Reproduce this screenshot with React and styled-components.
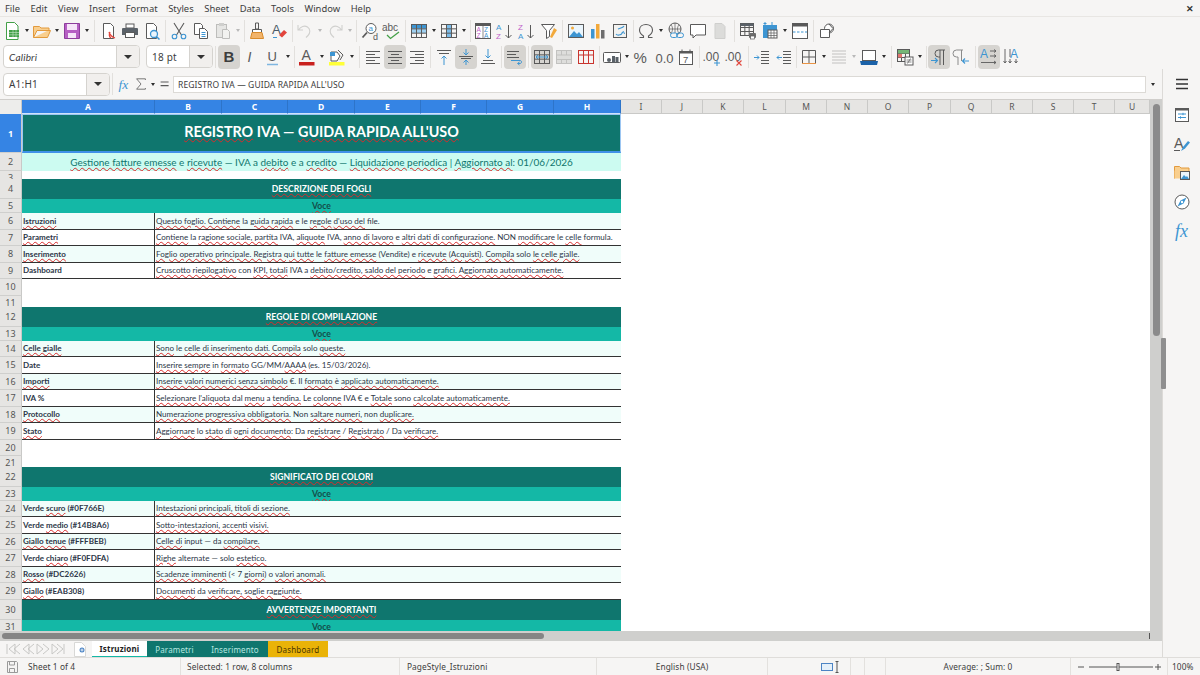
import React from "react";
import styled, { createGlobalStyle } from "styled-components";

const UI = `"Noto Sans", "Open Sans", sans-serif`;
const CELL = `Lato, "Open Sans", sans-serif`;
const DARK = "#0f766e";
const MID = "#14b8a6";
const LIGHT = "#f0fdfa";
const GREY = "#5a5a5a";
const BLUE = "#3d95d2";

const GlobalStyle = createGlobalStyle`
  html, body { margin: 0; padding: 0; background: #f6f5f4; }
  * { box-sizing: border-box; }
`;

const Window = styled.div`
  width: 1200px;
  height: 675px;
  display: flex;
  flex-direction: column;
  overflow: hidden;
  background: #f6f5f4;
  font-family: ${UI};
  color: #3d3d3d;
`;

const MenuBar = styled.div`
  height: 17px;
  flex: none;
  display: flex;
  align-items: center;
  padding: 0 5px;
  gap: 10.6px;
  font-size: 9.4px;
  border-bottom: 1px solid #e8e6e3;
  position: relative;
`;

const CloseMark = styled.span`
  position: absolute;
  right: 6px;
  top: 2px;
  font-size: 9px;
  font-weight: 700;
  color: #333;
`;

const Bar = styled.div`
  height: ${(p) => p.$h}px;
  flex: none;
  display: flex;
  align-items: center;
  padding-left: 1px;
`;

const ToolButton = styled.div`
  width: 22px;
  height: 24px;
  flex: none;
  display: flex;
  align-items: center;
  justify-content: center;
  border-radius: 4px;
  background: ${(p) => (p.$on ? "#d6d4d0" : "transparent")};
`;

const Caret = styled.div`
  width: 8px;
  flex: none;
  display: flex;
  justify-content: center;
  &::after {
    content: "";
    border-top: 3px solid ${(p) => (p.$off ? "#b9b9b9" : "#2e2e2e")};
    border-left: 2.5px solid transparent;
    border-right: 2.5px solid transparent;
  }
`;

const Sep = styled.div`
  width: ${(p) => p.$w}px;
  flex: none;
  height: 22px;
  display: flex;
  justify-content: center;
  &::after {
    content: "";
    width: 1px;
    background: #e2e0dd;
  }
`;

const Combo = styled.div`
  width: ${(p) => p.$w}px;
  height: 23px;
  flex: none;
  margin-left: ${(p) => p.$ml || 0}px;
  display: flex;
  background: #fff;
  border: 1px solid #d5d3cf;
  border-radius: 4px;
  overflow: hidden;
`;

const ComboText = styled.div`
  flex: 1;
  display: flex;
  align-items: center;
  padding-left: 5px;
  font-size: 10px;
  font-family: ${(p) => (p.$italic ? CELL : UI)};
  font-style: ${(p) => (p.$italic ? "italic" : "normal")};
  letter-spacing: 0.2px;
`;

const ComboArrow = styled.div`
  width: 23px;
  flex: none;
  display: flex;
  align-items: center;
  justify-content: center;
  background: #f1efed;
  border-left: 1px solid #d5d3cf;
  &::after {
    content: "";
    border-top: 4px solid #333;
    border-left: 4px solid transparent;
    border-right: 4px solid transparent;
  }
`;

const Body = styled.div`
  flex: 1;
  min-height: 0;
  display: flex;
`;

const MainColumn = styled.div`
  width: 1162px;
  flex: none;
  display: flex;
  flex-direction: column;
`;

const FormulaBar = styled.div`
  height: 30px;
  flex: none;
  display: flex;
  align-items: center;
  padding-left: 3px;
`;

const FormulaIcon = styled.div`
  width: ${(p) => p.$w}px;
  flex: none;
  display: flex;
  justify-content: center;
  align-items: center;
`;

const FormulaInput = styled.div`
  width: 973px;
  height: 17px;
  flex: none;
  display: flex;
  align-items: center;
  padding-left: 4px;
  background: #fff;
  border: 1px solid #dcdad6;
  font-size: 8.5px;
  letter-spacing: 0.1px;
`;

const Sheet = styled.div`
  flex: 1;
  min-height: 0;
  display: flex;
  background: #fff;
  border-top: 1px solid #d0cecb;
`;

const GridArea = styled.div`
  width: 1150px;
  flex: none;
  overflow: hidden;
`;

const HeaderRow = styled.div`
  display: flex;
  height: 14px;
`;

const Corner = styled.div`
  width: 22px;
  flex: none;
  background: #ededeb;
  border-right: 1px solid #c9c9c7;
`;

const ColHead = styled.div`
  width: ${(p) => p.$w}px;
  flex: none;
  display: flex;
  align-items: center;
  justify-content: center;
  font-size: 8.5px;
  font-weight: ${(p) => (p.$on ? 700 : 400)};
  color: ${(p) => (p.$on ? "#fff" : "#555")};
  background: ${(p) => (p.$on ? "#3584e4" : "#e6e5e3")};
  border-right: 1px solid ${(p) => (p.$on ? "#2d74c9" : "#c9c9c7")};
  border-bottom: 1px solid ${(p) => (p.$on ? "#cfe3fa" : "#c9c9c7")};
`;

const Row = styled.div`
  display: grid;
  grid-template-columns: 22px 133px 466px;
  height: ${(p) => p.$h}px;
`;

const RowHead = styled.div`
  display: flex;
  align-items: center;
  justify-content: center;
  font-size: 9px;
  font-weight: ${(p) => (p.$on ? 700 : 400)};
  color: ${(p) => (p.$on ? "#fff" : "#555")};
  background: ${(p) => (p.$on ? "#3584e4" : "#e6e5e3")};
  border-right: 1px solid #c9c9c7;
  border-bottom: 1px solid #cfcfcd;
`;

const Merged = styled.div`
  grid-column: span 2;
  display: flex;
  align-items: center;
  justify-content: center;
  position: relative;
  font-family: ${CELL};
  overflow: hidden;
  white-space: nowrap;
`;

const TitleCell = styled(Merged)`
  background: ${DARK};
  color: #fff;
  font-size: 14.35px;
  font-weight: 700;
  padding-bottom: 3px;
  border: 1px solid #9cc6f2;
  border-bottom: 2px solid #3f90e8;
`;

const SubtitleCell = styled(Merged)`
  background: #ccfbf1;
  color: ${DARK};
  font-size: 9.95px;
  padding-bottom: 1px;
`;

const SectionCell = styled(Merged)`
  background: ${DARK};
  color: #fff;
  font-size: 8.6px;
  font-weight: 700;
`;

const VoceCell = styled(Merged)`
  background: ${MID};
  color: #134e4a;
  font-size: 8.6px;
  font-weight: 700;
`;

const Cell = styled.div`
  display: flex;
  align-items: center;
  padding-left: 1px;
  font-family: ${CELL};
  font-size: 8.05px;
  font-weight: ${(p) => (p.$bold ? 700 : 400)};
  color: #2d3748;
  background: ${(p) => (p.$alt ? LIGHT : "#fff")};
  border-bottom: 1px solid #333;
  border-right: ${(p) => (p.$bold ? "1px solid #333" : "none")};
  white-space: nowrap;
  overflow: hidden;
`;

const Wavy = styled.span`
  text-decoration: underline wavy #d92b2b 1px;
  text-underline-offset: 1px;
`;

const VScroll = styled.div`
  width: 12px;
  flex: none;
  background: #cfcfcd;
  padding: 4px 2.5px 0;
`;

const VThumb = styled.div`
  height: 232px;
  border-radius: 4px;
  background: #8b8b8b;
`;

const HScroll = styled.div`
  height: 10px;
  flex: none;
  background: #cfcfcd;
  padding: 2px 12px 2px 2px;
  position: relative;
`;

const HThumb = styled.div`
  width: 542px;
  height: 6px;
  border-radius: 3px;
  background: #858585;
`;

const HMark = styled.div`
  position: absolute;
  left: 1149px;
  top: 2px;
  width: 1px;
  height: 6px;
  background: #555;
`;

const TabBar = styled.div`
  height: 16px;
  flex: none;
  display: flex;
  align-items: stretch;
  padding-left: 5px;
`;

const TabNav = styled.div`
  width: 62px;
  flex: none;
  display: flex;
  align-items: center;
  justify-content: center;
`;

const AddTab = styled.div`
  width: 25px;
  flex: none;
  display: flex;
  align-items: center;
  justify-content: center;
`;

const tabBg = { on: "#fff", teal: DARK, gold: "#eab308" };
const tabFg = { on: "#222", teal: "#b8e8e0", gold: "#4a3500" };

const Tab = styled.div`
  width: ${(p) => p.$w}px;
  flex: none;
  display: flex;
  align-items: center;
  justify-content: center;
  font-size: 8px;
  letter-spacing: 0.15px;
  font-weight: ${(p) => (p.$kind === "on" ? 700 : 400)};
  color: ${(p) => tabFg[p.$kind]};
  background: ${(p) => tabBg[p.$kind]};
  border-bottom: ${(p) => (p.$kind === "on" ? `1px solid ${MID}` : "none")};
`;

const Sidebar = styled.div`
  flex: 1;
  position: relative;
  display: flex;
  flex-direction: column;
  align-items: center;
  gap: 9px;
  padding-top: 5px;
  border-left: 1px solid #dcdad7;
`;

const SideIcon = styled.div`
  height: 20px;
  display: flex;
  align-items: center;
  justify-content: center;
  margin-bottom: ${(p) => p.$mb || 0}px;
`;

const SideHandle = styled.div`
  position: absolute;
  left: -2px;
  top: 269px;
  width: 5px;
  height: 51px;
  background: #8f8f8f;
  border-radius: 1px;
`;

const StatusBar = styled.div`
  height: 18px;
  flex: none;
  display: flex;
  align-items: center;
  font-size: 8.3px;
  letter-spacing: 0.1px;
  border-top: 1px solid #dfddda;
`;

const StatusPart = styled.div`
  width: ${(p) => p.$w}px;
  height: 100%;
  flex: none;
  display: flex;
  align-items: center;
  gap: 9px;
  padding-left: ${(p) => p.$pl || 0}px;
  justify-content: ${(p) => (p.$center ? "center" : "flex-start")};
  border-right: ${(p) => (p.$last ? "none" : "1px solid #e3e1de")};
`;

const Svg = ({ children, s = 20, w }) => (
  <svg width={w || s} height={s} viewBox={`0 0 ${w || s} ${s}`} fill="none" strokeWidth="1">
    {children}
  </svg>
);

const Table = ({ c = GREY, x = 2.5, y = 3.5, w = 15, h = 13 }) => (
  <g stroke={c}>
    <rect x={x} y={y} width={w} height={h} />
    <path d={`M${x} ${y + h / 3}H${x + w}M${x} ${y + (2 * h) / 3}H${x + w}M${x + w / 3} ${y}V${y + h}M${x + (2 * w) / 3} ${y}V${y + h}`} />
  </g>
);

const Letter = ({ x, y, c = GREY, size = 9, weight = 400, style, serif, children }) => (
  <text
    x={x}
    y={y}
    fill={c}
    fontSize={size}
    fontWeight={weight}
    fontFamily={serif ? "Liberation Serif, serif" : "Liberation Sans, sans-serif"}
    fontStyle={style}
  >
    {children}
  </text>
);

const icons = {
  new: (
    <>
      <path d="M4.5 1.5h8l3.5 3.5v13.500H4.500z" fill="#fff" stroke="#43a047" />
      <rect x="7" y="9" width="10" height="7" fill="#43a047" />
      <path d="M7 11.500h10M7 13.800h10M11 9v7M14 9v7" stroke="#c8e6c9" strokeWidth=".6" />
    </>
  ),
  open: <path d="M1.500 16.500V5.500h6l1.500 1.500h8v2.500H5l-3.500 7h14l3-7H16" fill="#f9cf8e" stroke="#e29a3d" />,
  save: (
    <>
      <path d="M2.500 2.500h15v15h-15z" fill="#b65fc4" stroke="#8d3d9c" />
      <rect x="5" y="3" width="10" height="6" fill="#f6e5f9" />
      <rect x="6" y="12" width="8" height="5" fill="#f6e5f9" />
    </>
  ),
  pdf: (
    <>
      <path d="M5.500 2.500h7l3 3v12h-10z" fill="#fff" stroke={GREY} />
      <path d="M11 11c1 3 3 5 6 6M13 17c-2-1-2-4-1-6" stroke="#e2453c" strokeWidth="1.300" />
    </>
  ),
  print: (
    <>
      <rect x="6" y="3" width="8" height="4" fill="#fff" stroke={GREY} />
      <path d="M3 7h14a1 1 0 0 1 1 1v6h-3v-2H5v2H2V8a1 1 0 0 1 1-1z" fill="#5b6269" />
      <rect x="5.500" y="11.500" width="9" height="5" fill="#fff" stroke={GREY} />
    </>
  ),
  preview: (
    <>
      <path d="M4.500 2.500h7l3 3v12h-10z" fill="#fff" stroke={GREY} />
      <circle cx="12" cy="13" r="3.500" fill="#eaf5fc" stroke={BLUE} strokeWidth="1.300" />
      <path d="M14.500 15.500l3 3" stroke={BLUE} strokeWidth="1.500" />
    </>
  ),
  cut: (
    <>
      <path d="M5 2l7.500 12M15 2L7.500 14" stroke={GREY} strokeWidth="1.100" />
      <circle cx="5.500" cy="15.500" r="2.300" stroke={BLUE} strokeWidth="1.100" />
      <circle cx="14.500" cy="15.500" r="2.300" stroke={BLUE} strokeWidth="1.100" />
    </>
  ),
  copy: (
    <>
      <path d="M3.500 2.500h6l2 2v9h-8z" fill="#fff" stroke={GREY} />
      <path d="M8.500 7.500h5l3 3v7h-8z" fill="#fff" stroke={GREY} />
      <path d="M10.500 11.500h4M10.500 13.500h4M10.500 15.500h4" stroke={BLUE} />
    </>
  ),
  paste: (
    <>
      <rect x="3.500" y="3.500" width="10" height="13" fill="#e6e6e4" stroke="#bdbdbb" />
      <rect x="6" y="2" width="5" height="3" fill="#cfcfcd" />
      <path d="M9.500 8.500h5l2 2v7h-7z" fill="#f2f2f0" stroke="#bdbdbb" />
    </>
  ),
  clone: (
    <>
      <path d="M8.500 2h3v6h-3z" stroke={GREY} />
      <path d="M5.500 8.500h9v3h-9z" fill="#fff" stroke={GREY} />
      <path d="M5 11.500h10l1.500 6h-13z" fill="#f2b46a" stroke="#d98b2b" />
    </>
  ),
  clear: (
    <>
      <Letter x="3" y="13" size={13} c="#4b5a68">A</Letter>
      <path d="M4 16.500h4" stroke={BLUE} />
      <path d="M10 14l5-5 3 2.500-5 5z" fill="#e2453c" />
    </>
  ),
  undo: <path d="M3 4v5h5M3.500 9c2-3.500 6-5 9-3 3 2 3 6 .5 8.500L11 16.500" stroke="#d0d0ce" strokeWidth="1.100" />,
  redo: <path d="M17 4v5h-5M16.500 9c-2-3.500-6-5-9-3-3 2-3 6-.5 8.500L9 16.500" stroke="#d0d0ce" strokeWidth="1.100" />,
  find: (
    <>
      <circle cx="11" cy="7.500" r="5" fill="#fff" stroke={GREY} />
      <path d="M7 11.500L2.500 16.500" stroke={GREY} strokeWidth="1.800" />
      <Letter x="8.500" y="10" size={8} c={BLUE}>a</Letter>
      <Letter x="13" y="19" size={9}>d</Letter>
    </>
  ),
  spell: (
    <>
      <Letter x="0" y="10" size={10}>abc</Letter>
      <path d="M5 14l3.500 3.500L17 11" stroke="#43a047" strokeWidth="1.300" />
    </>
  ),
  rows: (
    <>
      <rect x="3" y="7.500" width="14" height="4.500" fill="#9fd0f0" />
      <rect x="3" y="3.500" width="14" height="4" fill={BLUE} />
      <Table />
    </>
  ),
  cols: (
    <>
      <rect x="7.500" y="4" width="5" height="12" fill="#7cbce8" />
      <Table />
    </>
  ),
  sort: (
    <>
      <rect x="2.500" y="2.500" width="15" height="15" fill="#fff" stroke={GREY} />
      <rect x="2.500" y="2.500" width="15" height="2.500" fill={GREY} />
      <path d="M10 3v14" stroke={GREY} strokeWidth=".7" />
      <Letter x="3.500" y="11" size={6.500} c="#c05fc9">A</Letter>
      <Letter x="3.500" y="17" size={6.500} c="#c05fc9">Z</Letter>
      <Letter x="11" y="11" size={6.500} c={BLUE}>Z</Letter>
      <Letter x="11" y="17" size={6.500} c={BLUE}>A</Letter>
    </>
  ),
  sortAsc: (
    <>
      <Letter x="1" y="9" size={8} c={BLUE}>A</Letter>
      <Letter x="1" y="18" size={8} c="#c05fc9">Z</Letter>
      <path d="M13.500 4v13M10.500 14l3 3 3-3" stroke={GREY} />
    </>
  ),
  sortDesc: (
    <>
      <Letter x="1" y="9" size={8} c="#c05fc9">Z</Letter>
      <Letter x="1" y="18" size={8} c={BLUE}>A</Letter>
      <path d="M13.500 4v13M10.500 14l3 3 3-3" stroke={GREY} />
    </>
  ),
  filter: (
    <>
      <path d="M2.500 3.500h13l-5 6v6l-3 2v-8z" fill="#fff" stroke={GREY} />
      <path d="M15 7l3 2-5 8-2-1z" fill="#f2a93b" />
    </>
  ),
  image: (
    <>
      <rect x="2.500" y="3.500" width="15" height="13" fill="#eaf5fc" stroke={GREY} />
      <circle cx="6.500" cy="7" r="1.500" fill="#f2a93b" />
      <path d="M3 16l5-6 3 3 2-2 4 5z" fill={BLUE} />
    </>
  ),
  chart: (
    <>
      <rect x="3" y="8" width="3.500" height="9.500" fill={BLUE} />
      <rect x="8" y="3" width="3.500" height="14.500" fill="#f2a93b" />
      <rect x="13" y="9" width="3.500" height="8.500" fill="#6d6d6d" />
    </>
  ),
  pivot: (
    <>
      <rect x="3.500" y="3.500" width="13" height="13" fill="#f2f2f0" stroke={GREY} />
      <path d="M6 13c1 1.500 5 2 7-2M14 5c-1 2-4 2-6 3" stroke={BLUE} strokeWidth="1.100" />
      <path d="M11.500 12l2-1.500 1 2.500" stroke={BLUE} />
    </>
  ),
  omega: <path d="M3.500 16.500h4v-1.500C5 13.500 3.500 11.500 3.500 9c0-3.500 3-5.500 6.500-5.500s6.500 2 6.500 5.500c0 2.500-1.500 4.500-4 6v1.500h4" stroke={GREY} strokeWidth="1.100" />,
  link: (
    <>
      <circle cx="9" cy="8" r="6" stroke={GREY} />
      <path d="M3 8h12M9 2v12M5 3.500c2 3 2 6 0 9M13 3.500c-2 3-2 6 0 9" stroke={GREY} strokeWidth=".7" />
      <rect x="4.500" y="12" width="7" height="4.500" rx="2.200" fill="#f6f5f4" stroke={BLUE} />
      <rect x="10.500" y="12" width="7" height="4.500" rx="2.200" stroke={BLUE} />
    </>
  ),
  comment: <path d="M2.500 3.500h15v10.500H8L5 17v-3H2.500z" fill="#fff" stroke={GREY} />,
  headers: <path d="M5 2.500h7l3 3v12H5z" fill="#dcdcda" stroke="#cfcfcd" />,
  printArea: (
    <>
      <Table x={2.500} y={2.500} w={13} h={12} />
      <rect x="2.500" y="2.500" width="13" height="2.500" fill="#5b6269" />
      <rect x="11" y="12" width="7" height="5" rx="1" fill="#6d6d6d" />
      <rect x="12.500" y="15" width="4" height="3" fill="#fff" stroke={GREY} strokeWidth=".7" />
    </>
  ),
  freeze: (
    <>
      <rect x="3" y="4" width="14" height="13" fill={BLUE} />
      <rect x="8" y="9" width="9" height="8" fill="#fff" stroke={GREY} />
      <path d="M8 12h9M8 14.500h9M11 9v8M14 9v8" stroke={GREY} strokeWidth=".7" />
      <path d="M5 1v3M3.500 2.500h3M12 1v3" stroke={BLUE} />
    </>
  ),
  split: (
    <>
      <rect x="2.500" y="2.500" width="15" height="15" fill="#fff" stroke={GREY} />
      <rect x="2.500" y="2.500" width="15" height="3" fill={GREY} />
      <path d="M3 11h14" stroke={BLUE} strokeDasharray="2.500 1.500" />
    </>
  ),
  shapes: (
    <>
      <circle cx="12" cy="7.500" r="4.500" fill="#fff" stroke={GREY} />
      <path d="M3.500 8.500h9v8h-9z" fill="#fff" stroke={GREY} />
      <path d="M12 3l4 4.500-4 4.500" stroke={GREY} />
    </>
  ),
  bold: <Letter x="4.500" y="15" size={15} weight={700} c="#3d3d3d">B</Letter>,
  italic: <Letter x="6.500" y="15" size={14} style="italic">I</Letter>,
  underline: (
    <>
      <Letter x="4.500" y="14" size={13}>U</Letter>
      <path d="M4 17.500h11" stroke="#7fb6e0" strokeWidth="1.500" />
    </>
  ),
  fontColor: (
    <>
      <Letter x="4.500" y="13" size={14}>A</Letter>
      <rect x="2" y="15" width="15.500" height="3.500" fill="#c9211e" />
    </>
  ),
  bgColor: (
    <>
      <path d="M4 5h6l3 4-3 5H4z" fill="#fff" stroke={GREY} />
      <path d="M3 5h5v4H3z" fill={BLUE} />
      <path d="M11 3l5 5-3 5" stroke={GREY} />
      <rect x="2" y="15" width="15.500" height="3.500" fill="#ffff38" />
    </>
  ),
  alignLeft: <path d="M3 4.500h14M3 7.500h9M3 10.500h14M3 13.500h9M3 16.500h14" stroke={GREY} />,
  alignCenter: <path d="M3 4.500h14M6 7.500h8M3 10.500h14M6 13.500h8M3 16.500h14" stroke={GREY} />,
  alignRight: <path d="M3 4.500h14M8 7.500h9M3 10.500h14M8 13.500h9M3 16.500h14" stroke={GREY} />,
  alignTop: (
    <>
      <path d="M3 3.500h14M5 6.500h10" stroke={GREY} />
      <path d="M10 18V9M7.500 11.500L10 9l2.500 2.500" stroke={BLUE} />
    </>
  ),
  alignMid: (
    <>
      <path d="M3 9.500h14M5 11.500h10" stroke={GREY} />
      <path d="M10 2v6M7.500 5.500L10 8l2.500-2.500M10 18v-5M7.500 15.500L10 13l2.500 2.500" stroke={BLUE} />
    </>
  ),
  alignBottom: (
    <>
      <path d="M3 16.500h14M5 13.500h10" stroke={GREY} />
      <path d="M10 2v9M7.500 8.500L10 11l2.500-2.500" stroke={BLUE} />
    </>
  ),
  wrap: (
    <>
      <path d="M2 4.500h12M2 7.500h9M2 10.500h12" stroke={GREY} />
      <path d="M6 13.500h9c2 0 2 3 0 3h-2M14.500 15l-2 1.500 2 1.500" stroke={BLUE} />
    </>
  ),
  merge: (
    <>
      <Table />
      <path d="M4 10h12M6 8l-2 2 2 2M14 8l2 2-2 2" stroke={BLUE} />
    </>
  ),
  mergeOff: (
    <>
      <rect x="2.500" y="3.500" width="15" height="13" fill="#dededc" stroke="#c2c2c0" />
      <path d="M3 8h14M3 12.500h14M7.500 4v4M12.500 4v4M7.500 12.500v4M12.500 12.500v4" stroke="#c2c2c0" />
    </>
  ),
  unmerge: (
    <>
      <rect x="2.500" y="3.500" width="15" height="13" stroke="#c9352f" />
      <path d="M3 8h14M7.500 8v8M12.500 8v8M7.500 4v4M12.500 4v4" stroke="#c9352f" />
    </>
  ),
  currency: (
    <>
      <rect x="1.500" y="5.500" width="17" height="10" rx="1" fill="#fff" stroke={GREY} />
      <circle cx="7" cy="13" r="2" fill="#5b6269" />
      <rect x="10" y="9" width="3" height="6.500" fill="#5b6269" />
      <rect x="13.500" y="10" width="3" height="5.500" fill="#5b6269" />
    </>
  ),
  percent: <Letter x="1.500" y="15.500" size={15}>%</Letter>,
  decimal: <Letter x="1.500" y="15.500" size={13}>0.0</Letter>,
  date: (
    <>
      <rect x="3.500" y="4.500" width="13" height="13" fill="#fff" stroke={GREY} />
      <rect x="3.500" y="4.500" width="13" height="2" fill={GREY} />
      <path d="M6 2.500v3M14 2.500v3" stroke={GREY} />
      <Letter x="7" y="15.500" size={9.500}>7</Letter>
    </>
  ),
  addDec: (
    <>
      <Letter x="0.500" y="14" size={12}>.00</Letter>
      <path d="M15 13v6M12 16h6" stroke={BLUE} strokeWidth="1.100" />
    </>
  ),
  delDec: (
    <>
      <Letter x="0.500" y="14" size={12}>.00</Letter>
      <path d="M12.500 13.500l5 5M17.500 13.500l-5 5" stroke="#e2453c" strokeWidth="1.100" />
    </>
  ),
  indent: (
    <>
      <path d="M9 4.500h8M9 7.500h8M9 10.500h8M9 13.500h8M9 16.500h8" stroke={GREY} />
      <path d="M2 10.500h5M5 8.500l2 2-2 2" stroke={BLUE} />
    </>
  ),
  outdent: (
    <>
      <path d="M9 4.500h8M9 7.500h8M9 10.500h8M9 13.500h8M9 16.500h8" stroke={GREY} />
      <path d="M8 10.500H3M5 8.500l-2 2 2 2" stroke={BLUE} />
    </>
  ),
  borders: (
    <>
      <path d="M3.500 3.500h13v13h-13z" stroke={GREY} />
      <path d="M10 3.500v13M3.500 10h13" stroke={GREY} />
      <path d="M3 16.500h14" stroke="#e99445" />
    </>
  ),
  lineStyle: <path d="M3 4h14M3 7h14M3 10h14M3 13h14M3 16h14" stroke="#c2c2c0" strokeWidth="1.100" />,
  borderColor: (
    <>
      <rect x="3.500" y="3.500" width="13" height="10" fill="#fff" stroke={GREY} />
      <path d="M1 14h18l-1 4H2z" fill="#1b62a8" />
    </>
  ),
  conditional: (
    <>
      <Table x={2.500} y={2.500} w={12} h={12} />
      <rect x="3" y="3" width="11" height="3.500" fill="#76b576" />
      <rect x="3" y="7" width="4" height="3.500" fill="#e2756f" />
      <rect x="10" y="10" width="8" height="8" fill="#fff" stroke={GREY} />
      <path d="M11.500 13h5M11.500 15h5M15.500 11.500l-3 5" stroke={GREY} strokeWidth=".7" />
    </>
  ),
  ltr: (
    <>
      <path d="M16 3H9.500a3.500 3.500 0 0 0 0 7H11M11 3v15M14.500 3v15" stroke={GREY} />
      <path d="M2 13.500h6M6 11l2.500 2.500L6 16" stroke={BLUE} strokeWidth="1.100" />
    </>
  ),
  rtl: (
    <>
      <path d="M12 3H5.500a3.500 3.500 0 0 0 0 7H7V18M10.500 3v11" stroke="#8b8b8b" />
      <path d="M18 14h-6M14 11.500L11.500 14l2.500 2.500" stroke={BLUE} strokeWidth="1.100" />
    </>
  ),
  horizontal: (
    <>
      <Letter x="1" y="11" size={12} c={BLUE}>A</Letter>
      <path d="M11 4h6M15 2.500L17 4l-2 1.500M11 9h6M15 7.500L17 9l-2 1.500M2 15.500h15M15 14l2 1.500-2 1.500" stroke={GREY} strokeWidth=".9" />
    </>
  ),
  vertical: (
    <>
      <Letter x="9" y="11" size={12} c={BLUE}>A</Letter>
      <path d="M4 2v14M2.500 14L4 16l1.500-2M9 12v4M7.500 14L9 16l1.500-2M15 12v4M13.500 14l1.500 2 1.500-2M9 2v8" stroke={GREY} strokeWidth=".9" />
    </>
  ),
  fx: (
    <Letter x="4" y="15" size={15} style="italic" c={BLUE} serif>
      fx
    </Letter>
  ),
  sigma: <path d="M15.500 5V3.500h-11L10 10l-5.500 6.500h11V15" stroke={GREY} />,
  equals: <path d="M4.500 7.500h10M4.500 12h10" stroke={GREY} strokeWidth="1.500" />,
  menu: <path d="M4 5.500h12M4 10h12M4 14.500h12" stroke="#333" strokeWidth="1.300" />,
  props: (
    <>
      <rect x="3.500" y="3.500" width="13" height="13" fill="#fff" stroke={GREY} />
      <rect x="3.500" y="3.500" width="13" height="2" fill={GREY} />
      <path d="M6 9h8M6 12.500h8" stroke={BLUE} />
      <path d="M11 7.800v2.400M8.500 11.300v2.400" stroke={BLUE} />
    </>
  ),
  styles: (
    <>
      <Letter x="2" y="14" size={14}>A</Letter>
      <path d="M9 17l2-4 5-6 2 1.500-5 6z" fill={BLUE} />
      <path d="M2 16.500h6" stroke={GREY} />
    </>
  ),
  gallery: (
    <>
      <path d="M2.500 15.500v-12h5l1.500 1.500h8v3" fill="#f9cf8e" stroke="#e29a3d" />
      <path d="M2.500 7.500h6v8h-6z" fill="#f9cf8e" />
      <rect x="8.500" y="8.500" width="9" height="8" fill="#eaf5fc" stroke={GREY} />
      <path d="M9 16l3-4 2 2 1-1 2 3z" fill={BLUE} />
    </>
  ),
  navigator: (
    <>
      <circle cx="10" cy="10" r="7" fill="#fff" stroke={GREY} />
      <path d="M14.500 5.500L11.500 11.500 5.500 14.500 8.500 8.500z" fill={BLUE} />
      <circle cx="10" cy="10" r="1.200" fill="#fff" />
    </>
  ),
  sideFx: (
    <Letter x="3" y="16" size={18} style="italic" c={BLUE} serif>
      fx
    </Letter>
  ),
};

const Icon = ({ name }) => <Svg>{icons[name]}</Svg>;

// numbers in these lists are separator widths, "^" is a dropdown caret
const topTools = [
  "new", "^", "open", "^", "save", "^", 6, "pdf", "print", "preview", 5, "cut", "copy", "paste", "^-", 4,
  "clone", "clear", 4, "undo", "^-", "redo", "^-", 5, "find", "spell", 5, "rows", "^", "cols", "^", 4,
  "sort", "sortAsc", "sortDesc", "filter", 5, "image", "chart", "pivot", 4, "omega", "^", "link", "comment", "headers", 6,
  "printArea", "freeze", "^", "split", 5, "shapes",
];

const formatTools = [
  "bold*", "italic", "underline", "^", 4, "fontColor", "^", "bgColor", "^", 6, "alignLeft", "alignCenter*", "alignRight", 5,
  "alignTop", "alignMid*", "alignBottom", 5, "wrap*", 5, "merge*", "mergeOff", "unmerge", 4, "currency", "^", "percent", "decimal", "date", 4,
  "addDec", "delDec", 6, "indent", "outdent", 3, "borders", "^", "lineStyle", "^-", "borderColor", "^", 6, "conditional", "^", 4,
  "ltr*", "rtl", 6, "horizontal*", "vertical",
];

const Tools = ({ list }) =>
  list.map((item, i) => {
    if (typeof item === "number") return <Sep key={i} $w={item} />;
    if (item[0] === "^") return <Caret key={i} $off={item === "^-"} />;
    const on = item.endsWith("*");
    return (
      <ToolButton key={i} $on={on}>
        <Icon name={on ? item.slice(0, -1) : item} />
      </ToolButton>
    );
  });

// words in [brackets] get the spellchecker's red wave
const Spell = ({ text }) => (
  <span>
    {text.split(/(\[[^\]]+\])/).map((part, i) =>
      part[0] === "[" ? <Wavy key={i}>{part.slice(1, -1)}</Wavy> : part
    )}
  </span>
);

const columns = [
  ["A", 133, true], ["B", 67, true], ["C", 66, true], ["D", 67, true], ["E", 66, true], ["F", 66, true], ["G", 67, true], ["H", 67, true],
  ["I", 41], ["J", 41], ["K", 41], ["L", 42], ["M", 41], ["N", 41], ["O", 41], ["P", 42], ["Q", 41], ["R", 41], ["S", 41], ["T", 41], ["U", 35],
];

const rows = [
  { t: "title", h: 39, text: "[REGISTRO] IVA — [GUIDA RAPIDA ALL'USO]" },
  { t: "sub", h: 18, text: "[Gestione fatture emesse] e [ricevute] — IVA a [debito] e a [credito] — [Liquidazione periodica] | [Aggiornato al]: 01/06/2026" },
  { h: 8 },
  { t: "section", h: 20, text: "[DESCRIZIONE DEI FOGLI]" },
  { t: "voce", h: 14 },
  { a: "[Istruzioni]", b: "[Questo foglio. Contiene] la [guida rapida] e le [regole] [d'uso del] file.", alt: true },
  { a: "[Parametri]", b: "[Contiene] la [ragione sociale, partita] IVA, [aliquote] IVA, [anno di lavoro] e [altri dati di configurazione.] NON [modificare] le [celle] formula." },
  { a: "[Inserimento]", b: "[Foglio operativo principale. Registra qui tutte] le [fatture emesse] (Vendite) e [ricevute] ([Acquisti]). [Compila] solo [le celle gialle.]", alt: true },
  { a: "Dashboard", b: "[Cruscotto riepilogativo] con [KPI, totali] IVA a [debito/credito, saldo del periodo] e [grafici. Aggiornato automaticamente.]" },
  { h: 16.5 },
  { h: 11 },
  { t: "section", h: 20, text: "[REGOLE DI COMPILAZIONE]" },
  { t: "voce", h: 14 },
  { a: "[Celle gialle]", b: "[Sono] le [celle di inserimento dati. Compila] solo [queste.]", alt: true },
  { a: "Date", b: "[Inserire sempre] in [formato] GG/MM/[AAAA] (es. 15/03/2026)." },
  { a: "[Importi]", b: "[Inserire valori numerici senza simbolo] €. Il [formato] è [applicato automaticamente.]", alt: true },
  { a: "IVA %", b: "[Selezionare l'aliquota] dal [menu] a [tendina.] Le [colonne] IVA € e [Totale] sono [calcolate automaticamente.]" },
  { a: "[Protocollo]", b: "[Numerazione progressiva obbligatoria.] Non [saltare numeri,] non [duplicare.]", alt: true },
  { a: "[Stato]", b: "[Aggiornare] lo [stato] di [ogni documento]: Da [registrare] / [Registrato] / Da [verificare.]" },
  { h: 16.5 },
  { h: 10.5 },
  { t: "section", h: 20, text: "[SIGNIFICATO DEI COLORI]" },
  { t: "voce", h: 14 },
  { a: "Verde [scuro] (#0F766E)", b: "[Intestazioni principali, titoli di sezione.]", alt: true },
  { a: "Verde [medio] (#14B8A6)", b: "[Sotto-intestazioni, accenti visivi.]" },
  { a: "[Giallo tenue] (#FFFBEB)", b: "[Celle di] input — da [compilare.]", alt: true },
  { a: "Verde [chiaro] (#F0FDFA)", b: "[Righe] alternate — solo [estetico.]" },
  { a: "[Rosso] (#DC2626)", b: "[Scadenze imminenti] (< 7 [giorni]) o [valori anomali.]", alt: true },
  { a: "[Giallo] (#EAB308)", b: "[Documenti] da [verificare, soglie raggiunte.]" },
  { t: "section", h: 20, text: "[AVVERTENZE IMPORTANTI]" },
  { t: "voce", h: 14 },
];

const mergedCells = { title: TitleCell, sub: SubtitleCell, section: SectionCell, voce: VoceCell };

const SheetRow = ({ row, n }) => {
  const MergedCell = mergedCells[row.t];
  return (
    <Row $h={row.h || 16.5}>
      <RowHead $on={n === 1}>{n}</RowHead>
      {MergedCell && (
        <MergedCell>
          <Spell text={row.t === "voce" ? "[Voce]" : row.text} />
        </MergedCell>
      )}
      {row.a && (
        <>
          <Cell $bold $alt={row.alt}><Spell text={row.a} /></Cell>
          <Cell $alt={row.alt}><Spell text={row.b} /></Cell>
        </>
      )}
    </Row>
  );
};

const TabArrows = () => (
  <svg width="60" height="14" viewBox="0 0 60 14" fill="none" stroke="#c8c8c6">
    <path d="M1 2v10M9 2L3 7l6 5zM14 2L8 7l6 5M23 2l-6 5 6 5zM28 2l-6 5 6 5M31 2l6 5-6 5zM37 2l6 5-6 5M46 2l6 5-6 5zM58 2v10M51 2l6 5-6 5" />
  </svg>
);

const ZoomSlider = () => (
  <svg width="86" height="12" viewBox="0 0 86 12" fill="none" stroke="#555">
    <path d="M2 6h6M13 6h64M85 6h-6M82 3v6" strokeWidth="1" />
    <rect x="41" y="2.500" width="2" height="7" fill="#fff" />
  </svg>
);

export default function App() {
  return (
    <Window>
      <GlobalStyle />
      <MenuBar>
        {["File", "Edit", "View", "Insert", "Format", "Styles", "Sheet", "Data", "Tools", "Window", "Help"].map((m) => (
          <span key={m}>{m}</span>
        ))}
        <CloseMark>✕</CloseMark>
      </MenuBar>
      <Bar $h={27}>
        <Tools list={topTools} />
      </Bar>
      <Bar $h={25}>
        <Combo $w={137} $ml={2}>
          <ComboText $italic>Calibri</ComboText>
          <ComboArrow />
        </Combo>
        <Combo $w={67} $ml={6}>
          <ComboText>18 pt</ComboText>
          <ComboArrow />
        </Combo>
        <Sep $w={5} />
        <Tools list={formatTools} />
      </Bar>
      <Body>
        <MainColumn>
          <FormulaBar>
            <Combo $w={107}>
              <ComboText>A1:H1</ComboText>
              <ComboArrow />
            </Combo>
            <Sep $w={5} />
            <FormulaIcon $w={18}><Icon name="fx" /></FormulaIcon>
            <FormulaIcon $w={16}><Icon name="sigma" /></FormulaIcon>
            <Caret />
            <FormulaIcon $w={16}><Icon name="equals" /></FormulaIcon>
            <FormulaInput>REGISTRO IVA — GUIDA RAPIDA ALL'USO</FormulaInput>
            <FormulaIcon $w={14}>
              <Caret />
            </FormulaIcon>
          </FormulaBar>
          <Sheet>
            <GridArea>
              <HeaderRow>
                <Corner />
                {columns.map(([name, w, on]) => (
                  <ColHead key={name} $w={w} $on={on}>{name}</ColHead>
                ))}
              </HeaderRow>
              {rows.map((row, i) => (
                <SheetRow key={i} row={row} n={i + 1} />
              ))}
            </GridArea>
            <VScroll>
              <VThumb />
            </VScroll>
          </Sheet>
          <HScroll>
            <HThumb />
            <HMark />
          </HScroll>
          <TabBar>
            <TabNav><TabArrows /></TabNav>
            <AddTab>
              <svg width="14" height="15" viewBox="0 0 14 15" fill="none">
                <path d="M1.500.5h7l4 4v10h-11z" fill="#fff" stroke="#d8d8d6" />
                <circle cx="9" cy="8" r="2.500" fill="#4c84c4" />
                <path d="M7.500 8h3M9 6.500v3" stroke="#fff" strokeWidth=".8" />
              </svg>
            </AddTab>
            <Tab $w={55} $kind="on">Istruzioni</Tab>
            <Tab $w={55} $kind="teal">Parametri</Tab>
            <Tab $w={66} $kind="teal">Inserimento</Tab>
            <Tab $w={60} $kind="gold">Dashboard</Tab>
          </TabBar>
        </MainColumn>
        <Sidebar>
          <SideIcon $mb={2}><Icon name="menu" /></SideIcon>
          <SideIcon><Icon name="props" /></SideIcon>
          <SideIcon><Icon name="styles" /></SideIcon>
          <SideIcon><Icon name="gallery" /></SideIcon>
          <SideIcon><Icon name="navigator" /></SideIcon>
          <SideIcon><Icon name="sideFx" /></SideIcon>
          <SideHandle />
        </Sidebar>
      </Body>
      <StatusBar>
        <StatusPart $w={181} $pl={5}>
          <Svg s={14}>
            <path d="M2.500 1.500h9l1 1v10h-10z" stroke="#9a9a9a" />
            <path d="M4.500 2v3h5V2M4.500 12.500V8.500h5v4" stroke="#9a9a9a" />
          </Svg>
          Sheet 1 of 4
        </StatusPart>
        <StatusPart $w={219} $pl={6}>Selected: 1 row, 8 columns</StatusPart>
        <StatusPart $w={197} $pl={7}>PageStyle_Istruzioni</StatusPart>
        <StatusPart $w={171} $center>English (USA)</StatusPart>
        <StatusPart $w={83} $pl={53}>
          <svg width="18" height="12" viewBox="0 0 18 12" fill="none">
            <rect x=".5" y="2.500" width="11" height="7" fill="#e4f0fa" stroke="#4c84c4" />
            <path d="M16 .5v11M14.500.5h3M14.500 11.500h3" stroke="#555" />
          </svg>
        </StatusPart>
        <StatusPart $w={14} />
        <StatusPart $w={21} />
        <StatusPart $w={185} $center>Average: ; Sum: 0</StatusPart>
        <StatusPart $w={97} $center><ZoomSlider /></StatusPart>
        <StatusPart $w={32} $pl={4} $last>100%</StatusPart>
      </StatusBar>
    </Window>
  );
}
